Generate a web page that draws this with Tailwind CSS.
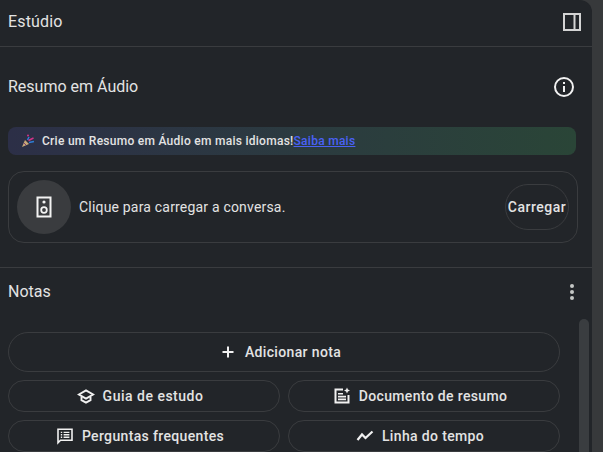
<!DOCTYPE html>
<html lang="pt">
<head>
<meta charset="utf-8">
<script src="https://cdn.jsdelivr.net/npm/@tailwindcss/browser@4"></script>
<title>Estúdio</title>
</head>
<body class="m-0 overflow-hidden bg-[#37393b]">
<div class="w-[603px] h-[452px] overflow-hidden font-['Roboto','Inter',sans-serif] text-[#e3e3e3]">
  <div class="relative w-[592px] h-[452px] bg-[#222529] rounded-tr-[12px] flex flex-col overflow-hidden">
    <header class="h-[47px] shrink-0 flex items-center justify-between pl-2 pr-[11px] pb-[3px] border-b border-[#3a3c3f]">
      <h2 class="text-[16px] leading-6 tracking-[0.15px]">Estúdio</h2>
      <svg width="18" height="18" viewBox="0 0 18 18" fill="none" stroke="#d4d4d4" stroke-width="2" class="mt-[1px]"><rect x="1" y="1" width="16" height="16"/><path d="M11.5 1v16"/></svg>
    </header>
    <section class="h-[221px] shrink-0 border-b border-[#3a3c3f] pl-2 pr-[14px]">
      <div class="h-[80px] flex items-center justify-between pr-[2px]">
        <h3 class="text-[16px] leading-6">Resumo em Áudio</h3>
        <svg width="24" height="24" viewBox="0 0 24 24" fill="none"><circle cx="12" cy="12" r="9" stroke="#f1f1f1" stroke-width="2"/><path d="M12 11v6" stroke="#f1f1f1" stroke-width="2"/><path d="M12 7v2" stroke="#f1f1f1" stroke-width="2"/></svg>
      </div>
      <div class="w-[568px] h-[28px] flex items-center rounded-[8px] bg-gradient-to-r from-[#2c2f47] to-[#2a4537] pl-[13px] pr-2 text-[12px] font-medium tracking-[0.27px]">
        <span class="w-[14px] h-[14px] mr-[7px] shrink-0">
          <svg width="14" height="14" viewBox="0 0 14 14"><path d="M1 13l3-7 4 4z" fill="#c9a878"/><path d="M3 9l2 2" stroke="#7a3b78" stroke-width="1"/><path d="M6.5 6l1.5-3" stroke="#2f7fd6" stroke-width="1.6"/><path d="M8 8.5l5-1" stroke="#2f7fd6" stroke-width="1.4"/><path d="M7.5 6.5l5-2.5" stroke="#d6338a" stroke-width="1.4"/><circle cx="7" cy="1.5" r="1" fill="#d6338a"/></svg>
        </span>
        <span class="text-[#e3e3e3]">Crie um Resumo em Áudio em mais idiomas!</span><a class="text-[#4a61f5] underline">Saiba mais</a>
      </div>
      <div class="mt-4 w-[570px] h-[72px] rounded-[16px] border border-[#3a3c3f] flex items-center pl-2 pr-2">
        <div class="w-[54px] h-[54px] rounded-full bg-[#3a3c3f] flex items-center justify-center shrink-0">
          <svg width="16" height="22" viewBox="0 0 16 22" fill="none"><rect x="1.5" y="1.5" width="13" height="19" stroke="#f3f3f3" stroke-width="2"/><circle cx="8" cy="6" r="1.6" fill="#f3f3f3"/><circle cx="8" cy="14" r="2.8" stroke="#f3f3f3" stroke-width="1.8"/></svg>
        </div>
        <span class="ml-2 text-[14px] tracking-[0.19px] text-[#e3e3e3]">Clique para carregar a conversa.</span>
        <button class="ml-auto w-[64px] h-[46px] rounded-full border border-[#3a3c3f] text-[14px] font-medium text-center tracking-[0.5px]">Carregar</button>
      </div>
    </section>
    <section class="flex-1 pl-2 relative">
      <div class="h-[48px] flex items-center justify-between pr-[14px]">
        <h3 class="text-[16px] leading-6">Notas</h3>
        <svg width="6" height="18" viewBox="0 0 6 18" fill="#c4c7c5" class="mr-[3px]"><circle cx="3" cy="3" r="2"/><circle cx="3" cy="9" r="2"/><circle cx="3" cy="15" r="2"/></svg>
      </div>
      <div class="w-[552px] mt-4 flex flex-col gap-2 text-[14px] font-medium tracking-[0.35px]">
        <button class="h-[40px] rounded-[20px] border border-[#3a3c3f] flex items-center justify-center gap-[10px] pr-[6px]">
          <svg width="14" height="14" viewBox="0 0 14 14" stroke="#f1f1f1" stroke-width="2"><path d="M7 1.5v11M1.5 7h11"/></svg>
          <span>Adicionar nota</span>
        </button>
        <div class="grid grid-cols-2 gap-2">
          <button class="h-[32px] rounded-[16px] border border-[#3a3c3f] flex items-center justify-center gap-2 pr-2">
            <svg width="18" height="18" viewBox="0 0 24 24" fill="none" stroke="#f1f1f1"><path d="M2.5 10 12 4.5 21.5 10 12 15.5z" stroke-width="2.6"/><path d="M6 13v4.5l6 3.3 6-3.3V13" stroke-width="2.6"/></svg>
            <span class="tracking-[0.5px]">Guia de estudo</span>
          </button>
          <button class="h-[32px] rounded-[16px] border border-[#3a3c3f] flex items-center justify-center gap-2 pr-2">
            <svg width="18" height="18" viewBox="0 0 18 18" fill="none"><path d="M10 2.5H2.5v13h13V8" stroke="#f1f1f1" stroke-width="2"/><path d="M5 6.8h5M5 9.6h8M5 12.4h8" stroke="#f1f1f1" stroke-width="1.6"/><path d="M14 0.5l.9 2.1 2.1.9-2.1.9L14 6.5l-.9-2.1-2.1-.9 2.1-.9z" fill="#f1f1f1"/></svg>
            <span>Documento de resumo</span>
          </button>
          <button class="h-[32px] rounded-[16px] border border-[#3a3c3f] flex items-center justify-center gap-2 pr-2">
            <svg width="18" height="18" viewBox="0 0 18 18" fill="none"><path d="M2 2.2h14v11H4.5L2 15.7z" stroke="#f1f1f1" stroke-width="1.6"/><path d="M4.8 5.4h1.4M4.8 7.8h1.4M4.8 10.2h1.4M7.6 5.4h5.8M7.6 7.8h5.8M7.6 10.2h5.8" stroke="#f1f1f1" stroke-width="1.4"/></svg>
            <span>Perguntas frequentes</span>
          </button>
          <button class="h-[32px] rounded-[16px] border border-[#3a3c3f] flex items-center justify-center gap-2 pr-2">
            <svg width="18" height="18" viewBox="0 0 18 18" fill="none" stroke="#f1f1f1" stroke-width="2.2"><path d="M1.5 13 6 7.5l3.5 3.5L16.5 4.5"/></svg>
            <span>Linha do tempo</span>
          </button>
        </div>
      </div>
      <div class="absolute right-[3px] top-[51px] bottom-0 w-[10px] bg-[#3a3d40] rounded-t-[5px]"></div>
    </section>
  </div>
</div>
</body>
</html>
